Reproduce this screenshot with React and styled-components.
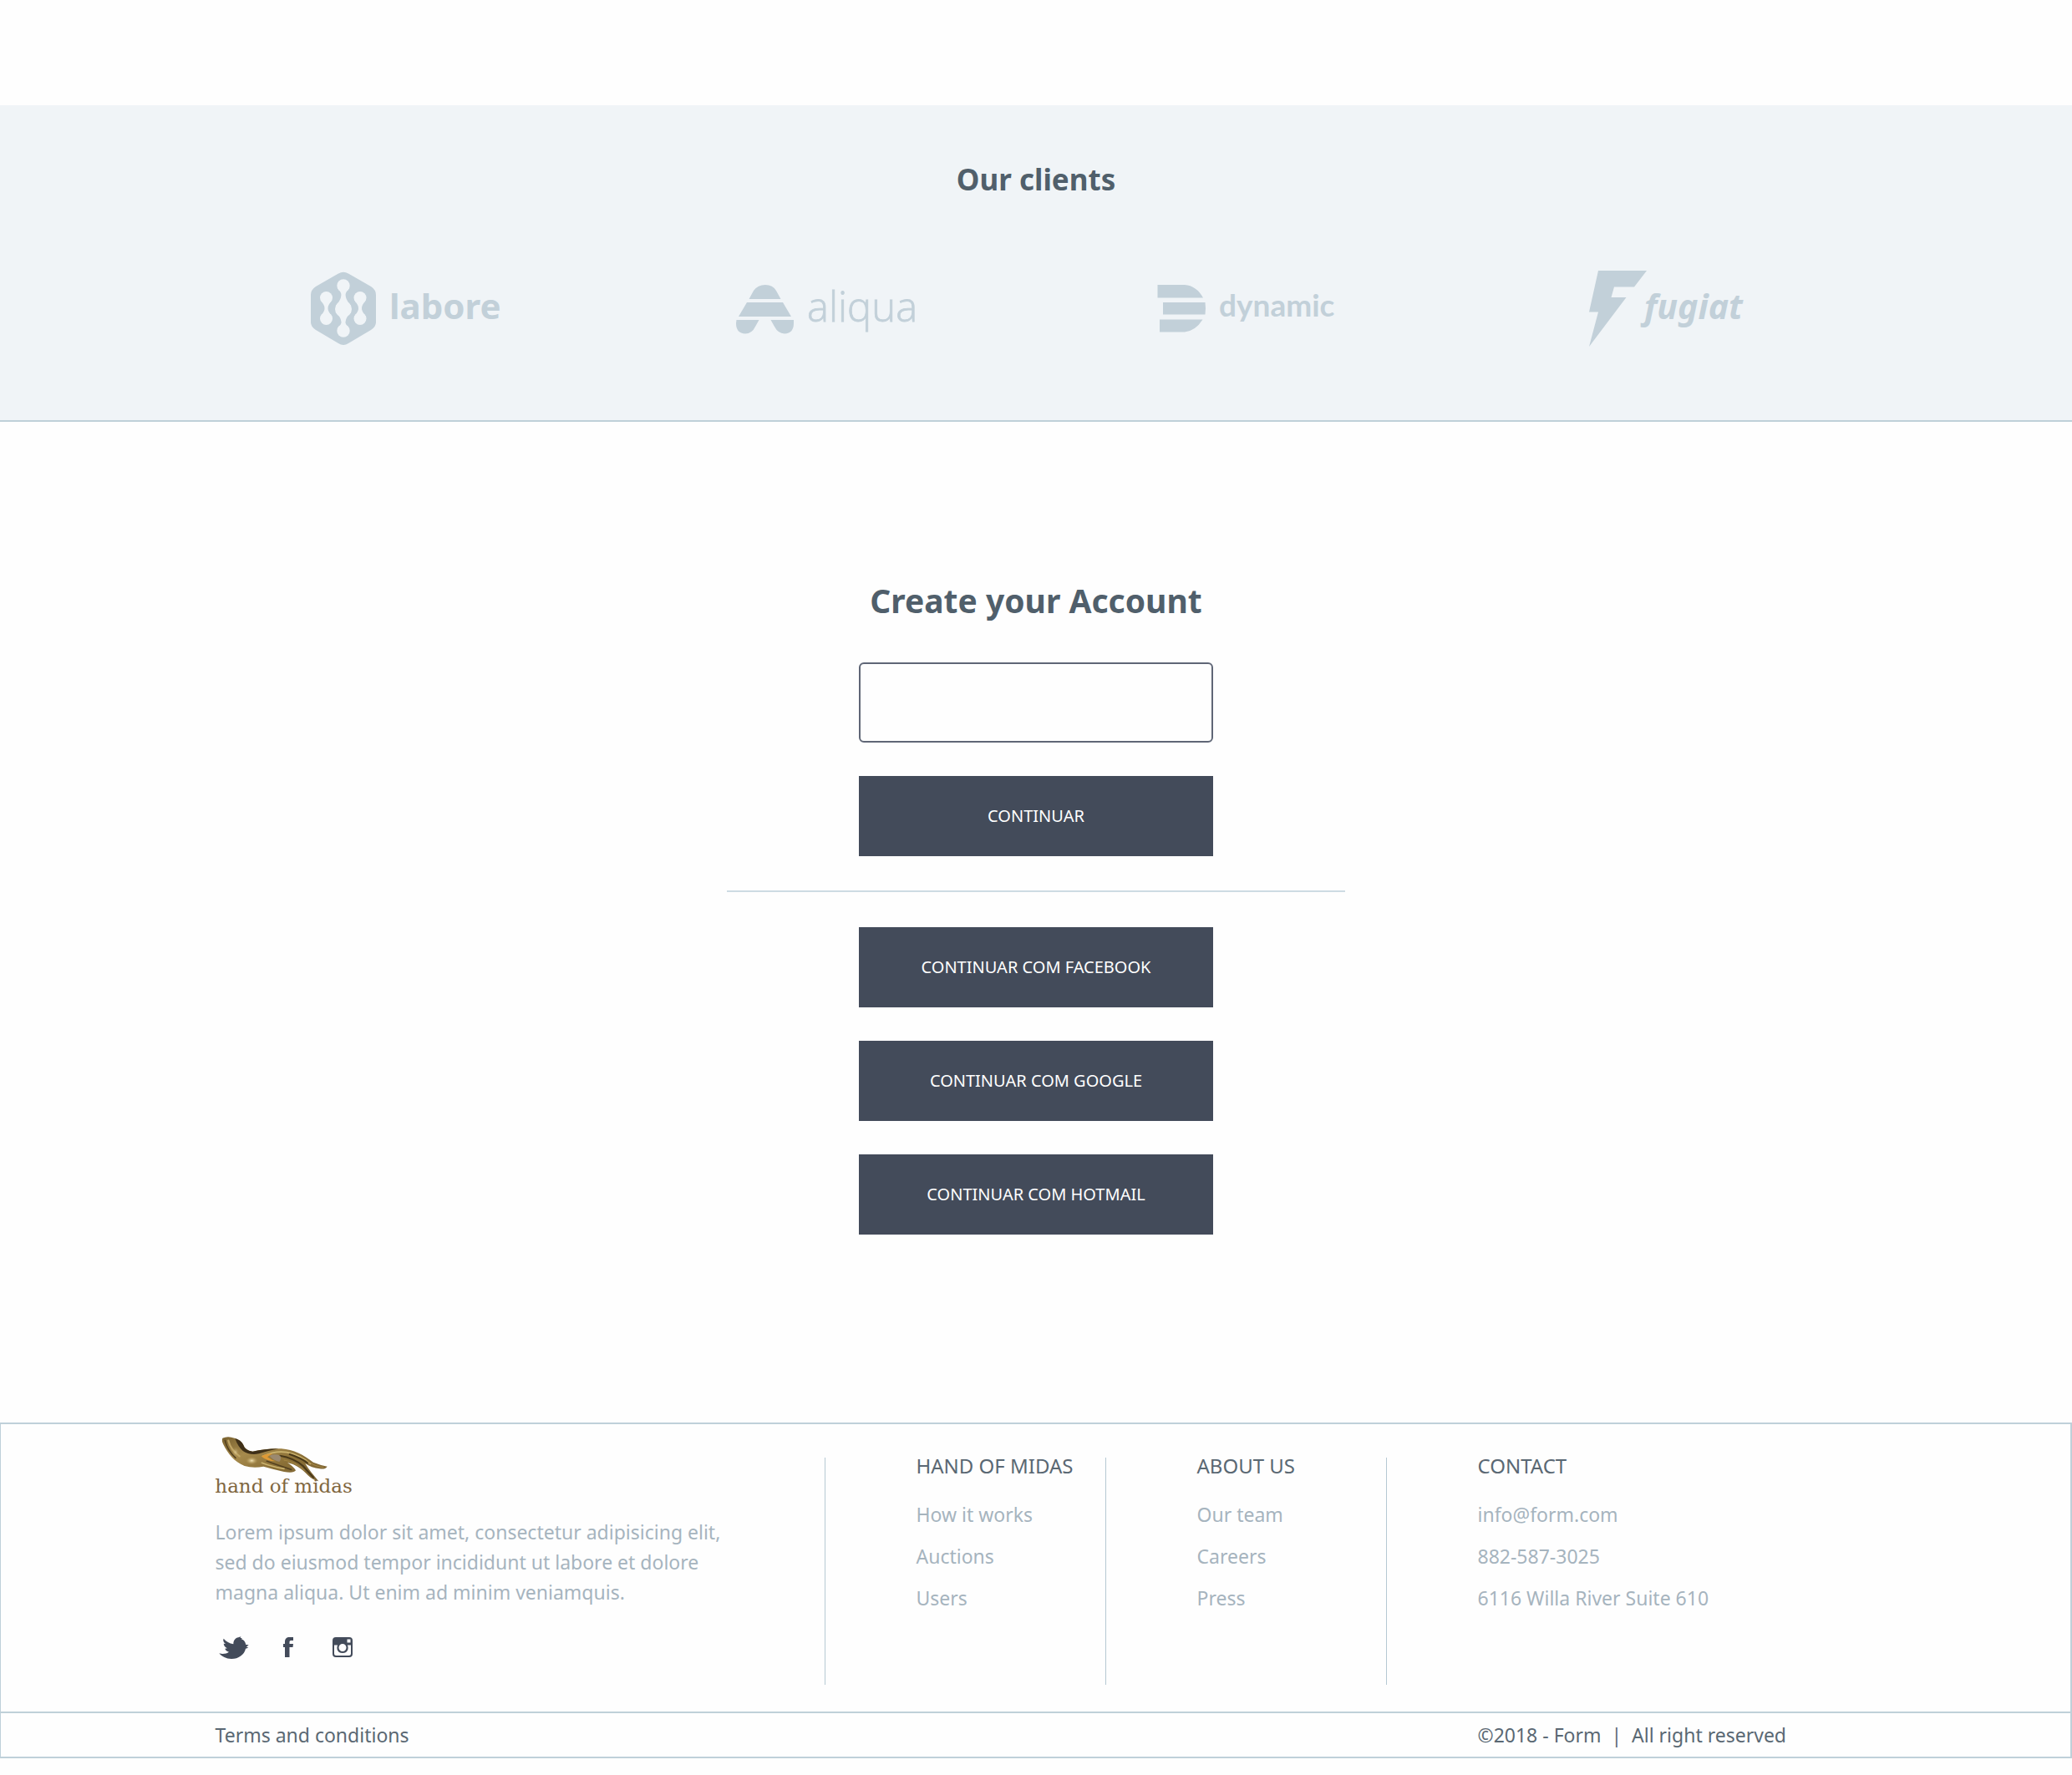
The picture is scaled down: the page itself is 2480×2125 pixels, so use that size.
import React from "react";
import styled, { createGlobalStyle } from "styled-components";

const color = {
  page: "#fefefe",
  band: "#f0f4f7",
  line: "#bfd0d9",
  mark: "#c2d0d9",
  title: "#505f6b",
  text: "#5a6873",
  muted: "#a6b4be",
  dark: "#434b5a",
  bronze: "#80663f",
};

const GlobalStyle = createGlobalStyle`
  *, *::before, *::after { box-sizing: border-box; }
  body {
    margin: 0;
    background: ${color.page};
    color: ${color.text};
    font-family: "Noto Sans", "Open Sans", sans-serif;
    font-size: 23px;
    line-height: 36px;
  }
  h1, h2, h3, p, ul { margin: 0; padding: 0; font-weight: 400; }
  ul { list-style: none; }
  a { color: inherit; text-decoration: none; }
  svg { display: block; overflow: visible; }
`;

const Page = styled.main`
  padding-top: 126px;
`;

const Clients = styled.section`
  background: ${color.band};
  border-bottom: 2px solid ${color.line};
  padding: 65px 0 83px;
`;

const Title = styled.h2`
  color: ${color.title};
  font-size: ${({ $size }) => $size}px;
  font-weight: 700;
  line-height: 48px;
  text-align: center;
`;

const ClientRow = styled.ul`
  display: grid;
  grid-template-columns: repeat(4, 1fr);
  align-items: center;
  justify-items: center;
  max-width: 2012px;
  margin: 81px auto 0;
`;

const Logo = styled.svg`
  width: ${({ $w }) => $w}px;
  height: 100px;
  fill: ${color.mark};
`;

const Account = styled.section`
  padding: 190px 24px 225px;
`;

const Form = styled.form`
  display: flex;
  flex-direction: column;
  align-items: center;
  gap: 40px;
  max-width: 740px;
  margin: 50px auto 0;
`;

const Field = styled.input`
  width: 424px;
  max-width: 100%;
  height: 96px;
  padding: 0 24px;
  border: 2px solid #5f6676;
  border-radius: 6px;
  background: ${color.page};
  color: ${color.text};
  font: inherit;
`;

const Button = styled.button`
  width: 424px;
  max-width: 100%;
  height: 96px;
  border: 0;
  background: ${color.dark};
  color: #fff;
  font-family: inherit;
  font-size: 20px;
  line-height: 28px;
`;

const Rule = styled.hr`
  width: 100%;
  height: 2px;
  margin: 1px 0 2px;
  border: 0;
  background: #cddbe3;
`;

const Footer = styled.footer`
  border: 2px solid ${color.line};
  border-left-width: 1px;
  margin-bottom: 20px;
`;

const FooterMain = styled.div`
  display: grid;
  grid-template-columns: 729fr 336fr 336fr 563fr;
  max-width: 1964px;
  margin: 0 auto;
  padding-bottom: 32px;
`;

const Brand = styled.div`
  padding-top: 13px;
  padding-right: 80px;
`;

const BrandLink = styled.a`
  display: block;
  width: 180px;
`;

const Blurb = styled.p`
  margin-top: 26px;
  color: ${color.muted};
  white-space: pre-line;
`;

const Social = styled.ul`
  display: flex;
  gap: 21px;
  margin-top: 32px;
`;

const SocialLink = styled.a`
  display: flex;
  align-items: center;
  justify-content: center;
  width: 44px;
  height: 32px;
  fill: ${color.dark};
`;

const Column = styled.nav`
  height: 272px;
  margin-top: 40px;
  padding-left: 109px;
  border-left: 1px solid #b6c9d3;
`;

const ColumnTitle = styled.h3`
  margin-top: -8px;
  font-size: 24px;
  line-height: 36px;
  white-space: nowrap;
`;

const Links = styled.ul`
  display: flex;
  flex-direction: column;
  gap: 14px;
  margin-top: 22px;
  color: ${color.muted};
  white-space: nowrap;
`;

const Legal = styled.div`
  border-top: 2px solid ${color.line};
`;

const LegalRow = styled.div`
  display: grid;
  grid-template-columns: 1511fr 453fr;
  max-width: 1964px;
  margin: 0 auto;
  padding: 8px 0;
  white-space: pre;
`;

function Labore() {
  return (
    <Logo $w={232} viewBox="370 320 232 100" role="img" aria-label="labore">
      <path d="M405 327.500Q411 324 417 327.500L444 343Q450 347 450 353V386Q450 391 444 395L417 411Q411 415 405 411L378 395Q372 391 372 386V353Q372 347 378 343Z" />
      <g fill={color.band}>
        <circle cx="411" cy="342" r="7.700" />
        <circle cx="411" cy="370" r="10" />
        <circle cx="411" cy="396" r="7.700" />
        <path d="M404 345Q410 351 408 356Q407 360 402 366V374Q407 379 408 383Q410 388 404 393H418Q412 388 414 383Q415 379 420 374V366Q415 360 414 356Q412 351 418 345Z" />
        <circle cx="390.500" cy="356.500" r="7.500" />
        <circle cx="390.500" cy="381.500" r="7.500" />
        <path d="M383.500 359Q389 366 388.500 369Q389 372 383.500 379H397.500Q392 372 392.500 369Q392 366 397.500 359Z" />
        <circle cx="431" cy="356.500" r="7.500" />
        <circle cx="431" cy="381.500" r="7.500" />
        <path d="M424 359Q429.500 366 429 369Q429.500 372 424 379H438Q432.500 372 433 369Q432.500 366 438 359Z" />
      </g>
      <text x="466" y="382" fontFamily="'Noto Sans', sans-serif" fontWeight="700" fontSize="42">labore</text>
    </Logo>
  );
}

function Aliqua() {
  return (
    <Logo $w={220} viewBox="880 320 220 100" role="img" aria-label="aliqua">
      <path d="M897.500 358L903 348Q908 341 917 341Q926 341 930 348L935.500 358ZM895 362H938L948 379H885ZM882.500 383H909.500L905 391Q901 399.500 893 399.500Q882 399 882 387ZM923.500 383H951V387Q951 399 940 399.500Q932 399 928 391Z" />
      <text x="967" y="385" fontFamily="'Open Sans', sans-serif" fontWeight="300" fontSize="49" stroke={color.mark} strokeWidth="0.800">aliqua</text>
    </Logo>
  );
}

function Dynamic() {
  return (
    <Logo $w={216} viewBox="1383 320 216 100" role="img" aria-label="dynamic">
      <path d="M1384.500 341H1417Q1431 342 1439 356.500H1384.500ZM1391 362H1441.500Q1442.500 369 1441.500 376.500H1391ZM1387 382.500H1438.500Q1430 396 1417 397.500H1387Z" />
      <text x="1458" y="379" fontFamily="Lato, sans-serif" fontWeight="700" fontSize="37">dynamic</text>
    </Logo>
  );
}

function Fugiat() {
  return (
    <Logo $w={190} viewBox="1900 320 190 100" role="img" aria-label="fugiat">
      <path d="M1913 324H1971L1956 343.500H1932L1928.500 356H1946.500L1902 415L1913 373.500H1902Z" />
      <text x="1968" y="382" fontFamily="'Noto Sans', sans-serif" fontWeight="700" fontStyle="italic" fontSize="41">fugiat</text>
    </Logo>
  );
}

function MidasLogo() {
  return (
    <svg width="180" height="72" viewBox="54 84 540 216" role="img" aria-label="hand of midas">
      <defs>
        <linearGradient id="bronze" x1="0" y1="0" x2="1" y2="1">
          <stop offset="0" stopColor="#7a6230" />
          <stop offset="0.300" stopColor="#a68a4c" />
          <stop offset="0.600" stopColor="#8a6f36" />
          <stop offset="1" stopColor="#7b6337" />
        </linearGradient>
        <radialGradient id="shine">
          <stop offset="0" stopColor="#f3e5b4" />
          <stop offset="1" stopColor="#b89a58" stopOpacity="0" />
        </radialGradient>
      </defs>
      <path fill="url(#bronze)" d="M79 95Q98 86 122 95Q145 102 153 118Q160 140 187 143C220 136 255 131 290 133C335 136 370 156 405 182Q430 192 455 197Q448 208 428 205Q398 202 376 186Q385 202 398 218Q412 235 424 250Q403 246 386 229C362 202 340 190 312 183Q333 196 342 211Q335 222 300 216Q262 207 226 197Q190 204 158 195C120 180 98 150 82 118Q75 104 79 95Z" />
      <path fill="#3f3018" d="M124 96Q145 102 153 118Q160 140 187 143Q230 134 280 133Q240 141 210 151Q175 157 152 141Q134 125 124 96Z" />
      <g fill="none" strokeLinecap="round">
        <path stroke="#c0a565" strokeWidth="7" d="M100 104Q108 137 140 160" />
        <path stroke="#54411f" strokeWidth="5" d="M88 103Q95 137 126 166M238 178Q276 192 326 208" />
        <path stroke="#cbb36e" strokeWidth="5" d="M224 160Q270 139 310 146Q360 157 395 187M220 184Q255 198 300 205" />
        <path stroke="#493818" strokeWidth="6" d="M285 158Q335 166 368 195Q388 218 405 236M320 153Q360 166 384 184" />
        <path stroke="#a58745" strokeWidth="3" d="M300 174Q340 180 374 211M380 176Q412 198 441 200" />
      </g>
      <path fill="#df9a35" d="M218 160Q240 148 258 151L240 163Q256 175 270 178Q236 178 218 160Z" />
      <path fill="#9b8970" d="M248 158Q267 150 286 158Q292 168 283 180Q260 175 248 158Z" />
      <ellipse cx="184" cy="176" rx="22" ry="14" fill="url(#shine)" />
      <ellipse cx="126" cy="145" rx="13" ry="18" fill="url(#shine)" opacity="0.500" />
      <text x="52" y="292" fill={color.bronze} fontFamily="'DejaVu Serif', serif" fontSize="69">hand of midas</text>
    </svg>
  );
}

function Twitter() {
  return (
    <svg width="36" height="27" viewBox="65 88 108 81" aria-hidden="true">
      <path d="M66 149C80 153 92 150 101 144C94 142 88 138 87 132L95 131C87 127 83 121 82 114L89 115C81 109 79 102 82 96C91 107 103 113 117 116C117 102 125 94 135 92L144 89L142 94L148 94L146 98C155 101 160 109 162 118L172 119L164 126L171 129L161 132C157 153 135 169 110 169C91 169 76 161 66 149Z" />
    </svg>
  );
}

function Facebook() {
  return (
    <svg width="12" height="24" viewBox="0 0 12 24" aria-hidden="true">
      <path d="M2 24V12H0V8H2V5.500C2 2 4 0 7.500 0H12V4H9Q7.500 4 7.500 5.500V8H12L11.500 12H7.500V24Z" />
    </svg>
  );
}

function Instagram() {
  return (
    <svg width="24" height="24" viewBox="0 0 24 24" aria-hidden="true">
      <path fillRule="evenodd" d="M4 0H20Q24 0 24 4V20Q24 24 20 24H4Q0 24 0 20V4Q0 0 4 0ZM17.500 2.500V6.500H21.500V2.500ZM2 9.500V19.500Q2 22 4.500 22H19.500Q22 22 22 19.500V9.500H18Q19 12 18.500 14.500Q17 19 12 19Q7 19 5.500 14.500Q5 12 6 9.500ZM12 8A4.500 4.500 0 1 0 12 17A4.500 4.500 0 1 0 12 8Z" />
    </svg>
  );
}

const clients = [
  ["labore", Labore],
  ["aliqua", Aliqua],
  ["dynamic", Dynamic],
  ["fugiat", Fugiat],
];

const providers = ["FACEBOOK", "GOOGLE", "HOTMAIL"];

const socials = [
  ["Twitter", Twitter],
  ["Facebook", Facebook],
  ["Instagram", Instagram],
];

const columns = [
  { title: "HAND OF MIDAS", links: ["How it works", "Auctions", "Users"] },
  { title: "ABOUT US", links: ["Our team", "Careers", "Press"] },
  { title: "CONTACT", links: ["info@form.com", "882-587-3025", "6116 Willa River Suite 610"] },
];

export default function App() {
  return (
    <>
      <GlobalStyle />
      <Page>
        <Clients>
          <Title $size={35}>Our clients</Title>
          <ClientRow>
            {clients.map(([name, Mark]) => (
              <li key={name}><Mark /></li>
            ))}
          </ClientRow>
        </Clients>
        <Account>
          <Title as="h1" $size={39} id="account-title">Create your Account</Title>
          <Form onSubmit={(event) => event.preventDefault()}>
            <Field type="email" aria-labelledby="account-title" />
            <Button type="submit">CONTINUAR</Button>
            <Rule />
            {providers.map((name) => (
              <Button key={name} type="button">CONTINUAR COM {name}</Button>
            ))}
          </Form>
        </Account>
      </Page>
      <Footer>
        <FooterMain>
          <Brand>
            <BrandLink href="#"><MidasLogo /></BrandLink>
            <Blurb>
              {"Lorem ipsum dolor sit amet, consectetur adipisicing elit,\nsed do eiusmod tempor incididunt ut labore et dolore\nmagna aliqua. Ut enim ad minim veniamquis."}
            </Blurb>
            <Social>
              {socials.map(([name, Icon]) => (
                <li key={name}>
                  <SocialLink href="#" aria-label={name}><Icon /></SocialLink>
                </li>
              ))}
            </Social>
          </Brand>
          {columns.map(({ title, links }) => (
            <Column key={title} aria-label={title}>
              <ColumnTitle>{title}</ColumnTitle>
              <Links>
                {links.map((label) => (
                  <li key={label}><a href="#">{label}</a></li>
                ))}
              </Links>
            </Column>
          ))}
        </FooterMain>
        <Legal>
          <LegalRow>
            <a href="#">Terms and conditions</a>
            <span>{"©2018 - Form  |  All right reserved"}</span>
          </LegalRow>
        </Legal>
      </Footer>
    </>
  );
}
